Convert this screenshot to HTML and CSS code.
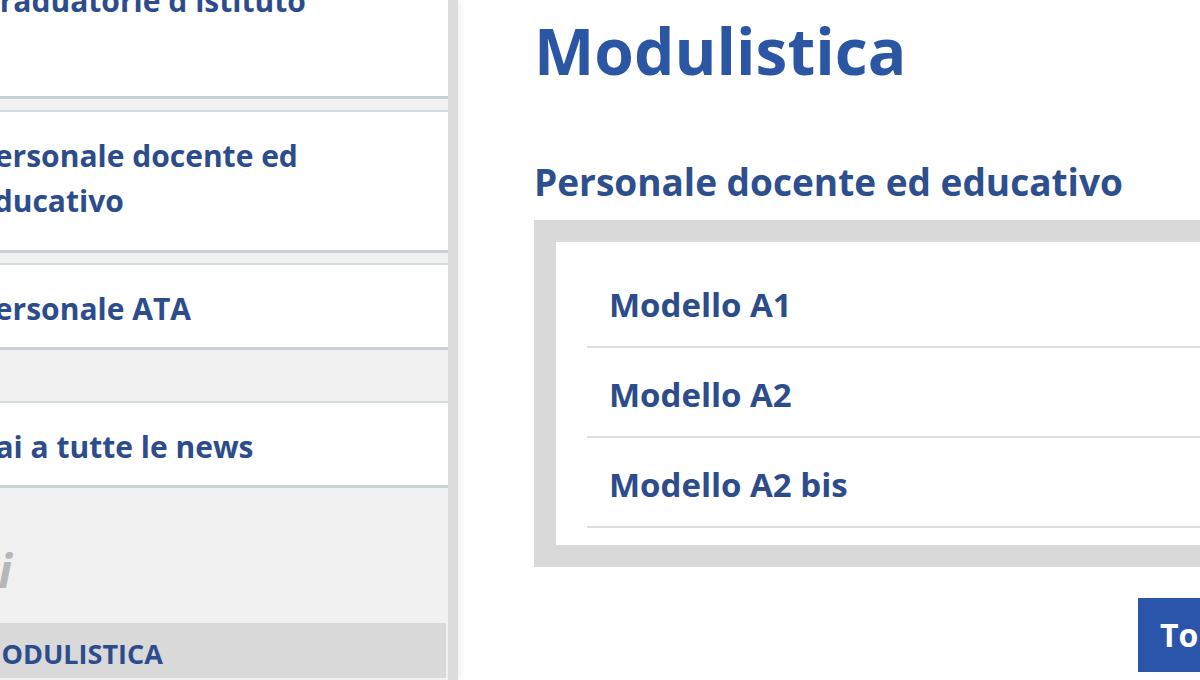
FILE: index.html
```html
<!DOCTYPE html>
<html lang="it">
<head>
<meta charset="utf-8">
<title>Modulistica</title>
<link rel="stylesheet" href="styles.css">
</head>
<body>
<div class="page">
  <aside class="sidebar">
    <div class="side-inner">
      <a class="card card-first" href="#">Graduatorie d'istituto</a>
      <a class="card card-tall" href="#">Personale docente ed educativo</a>
      <a class="card card-gap" href="#">Personale ATA</a>
      <a class="card" href="#">Vai a tutte le news</a>
      <div class="widget-title"><span>Servizi</span></div>
      <div class="menu-item">MODULISTICA</div>
    </div>
  </aside>
  <main class="content">
    <h1 class="title">Modulistica</h1>
    <h2 class="subtitle">Personale docente ed educativo</h2>
    <div class="box">
      <ul class="list">
        <li><a href="#">Modello A1</a></li>
        <li><a href="#">Modello A2</a></li>
        <li><a href="#">Modello A2 bis</a></li>
      </ul>
    </div>
    <div class="actions">
      <a class="btn" href="#">Torna su</a>
    </div>
  </main>
</div>
</body>
</html>
```

FILE: styles.css
```css
html, body {
  margin: 0;
  padding: 0;
  overflow: hidden;
  background: #ffffff;
}
body {
  font-family: "Open Sans", "Noto Sans", sans-serif;
  width: 1200px;
  height: 680px;
}
.page {
  display: flex;
  width: 1400px;
  height: 680px;
}
.sidebar {
  width: 448px;
  flex: none;
  background: #f1f1f1;
  border-right: 10px solid #dcdcdc;
  box-shadow: 3px 0 6px rgba(0, 0, 0, 0.06);
  overflow: hidden;
}
.side-inner {
  margin-left: -24px;
  margin-top: -45px;
  display: flex;
  flex-direction: column;
}
.card {
  display: block;
  background: #ffffff;
  border-top: 2px solid #d4dcdf;
  border-bottom: 3px solid #c6d1d4;
  padding: 21px 20px 16px 0;
  font-size: 30px;
  line-height: 45px;
  font-weight: 700;
  color: #2c4c8b;
  text-decoration: none;
  margin-bottom: 10px;
}
.card-first {
  padding-bottom: 73px;
  margin-bottom: 11px;
  padding-left: 2px;
}
.card-tall {
  padding-right: 100px;
  padding-bottom: 27px;
}
.card-gap {
  margin-bottom: 51px;
}
.widget-title {
  width: 12px;
  display: flex;
  justify-content: flex-end;
  margin-top: 30px;
  margin-left: 24px;
  height: 95px;
  line-height: 84px;
  font-size: 46px;
  font-style: italic;
  font-weight: 700;
  color: #b7b7b7;
  white-space: nowrap;
}
.menu-item {
  background: #d9d9d9;
  margin-right: 2px;
  height: 55px;
  line-height: 62px;
  font-size: 27px;
  font-weight: 700;
  color: #2c4c8b;
  overflow: hidden;
}
.content {
  flex: none;
  width: 804px;
  padding-left: 76px;
}
.title {
  margin: 6px 0 0;
  font-size: 64px;
  line-height: 90px;
  font-weight: 700;
  color: #2b56a4;
}
.subtitle {
  margin: 61px 0 0;
  font-size: 37px;
  line-height: 50px;
  font-weight: 700;
  color: #2d4f8e;
}
.box {
  margin-top: 13px;
  background: #d9d9d9;
  padding: 22px;
}
.list {
  list-style: none;
  margin: 0;
  padding: 16px 0 17px 31px;
  background: #ffffff;
}
.list li {
  border-bottom: 2px solid #dedede;
  height: 90px;
  box-sizing: border-box;
  padding-top: 4px;
  display: flex;
  align-items: center;
}
.list a {
  font-size: 33px;
  font-weight: 700;
  color: #2c4c8b;
  text-decoration: none;
  padding-left: 22px;
}
.actions {
  display: flex;
  justify-content: flex-end;
  margin-top: 31px;
}
.btn {
  width: 200px;
  height: 74px;
  line-height: 74px;
  background: #2b55a8;
  color: #ffffff;
  font-size: 32px;
  font-weight: 700;
  text-decoration: none;
  box-sizing: border-box;
  padding-left: 22px;
}
```
